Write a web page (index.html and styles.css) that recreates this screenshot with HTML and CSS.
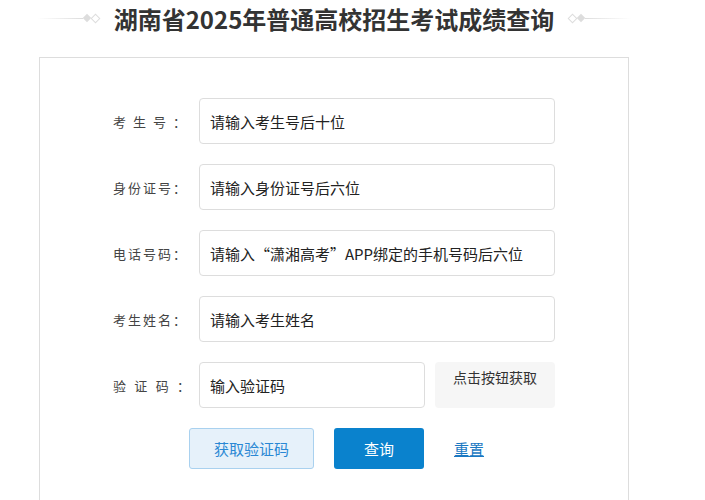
FILE: index.html
```html
<!DOCTYPE html>
<html lang="zh-CN">
<head>
    <meta charset="UTF-8">
    <meta name="viewport" content="width=device-width, initial-scale=1.0">
    <title>湖南省2025年普通高校招生考试成绩查询</title>
    <link rel="stylesheet" href="styles.css">
</head>
<body>
    <div class="wrap">
        <div class="title">
            <span class="deco deco-left"><i class="line"></i><i class="dia"></i><i class="dia dia-o"></i></span>
            <h1>湖南省2025年普通高校招生考试成绩查询</h1>
            <span class="deco deco-right"><i class="dia dia-o"></i><i class="dia"></i><i class="line"></i></span>
        </div>

        <div class="card">
            <div class="row">
                <label class="lbl">考生号：</label>
                <input class="ipt" type="text" placeholder="请输入考生号后十位">
            </div>
            <div class="row">
                <label class="lbl">身份证号：</label>
                <input class="ipt" type="text" placeholder="请输入身份证号后六位">
            </div>
            <div class="row">
                <label class="lbl">电话号码：</label>
                <input class="ipt" type="text" placeholder="请输入“潇湘高考”APP绑定的手机号码后六位">
            </div>
            <div class="row">
                <label class="lbl">考生姓名：</label>
                <input class="ipt" type="text" placeholder="请输入考生姓名">
            </div>
            <div class="row">
                <label class="lbl lbl-wide">验证码：</label>
                <input class="ipt ipt-code" type="text" placeholder="输入验证码">
                <div class="code-box">点击按钮获取</div>
            </div>
            <div class="btns">
                <button class="btn btn-light">获取验证码</button>
                <button class="btn btn-blue">查询</button>
                <a class="reset" href="#">重置</a>
            </div>
        </div>
    </div>
</body>
</html>
```

FILE: styles.css
```css
body {
    margin: 0;
    background: #fff;
    font-family: "Noto Sans CJK SC", "Liberation Sans", sans-serif;
    color: #333;
}
.wrap {
    width: 590px;
    margin-left: 39px;
}
.title {
    display: flex;
    align-items: center;
    justify-content: center;
    height: 36px;
    margin-bottom: 21px;
}
.title h1 {
    margin: 0 14px;
    font-size: 24px;
    font-weight: bold;
    color: #333;
    white-space: nowrap;
}
.deco {
    display: flex;
    align-items: center;
}
.deco .line {
    display: block;
    width: 46px;
    height: 1px;
    background: linear-gradient(to right, #fff, #ddd);
}
.deco-right .line {
    background: linear-gradient(to left, #fff, #ddd);
}
.deco .dia {
    display: block;
    width: 6px;
    height: 6px;
    background: #ddd;
    transform: rotate(45deg);
    margin: 0 1px;
}
.deco .dia-o {
    background: #fff;
    border: 1px solid #ddd;
    width: 5px;
    height: 5px;
}
.card {
    box-sizing: border-box;
    height: 443px;
    border: 1px solid #ddd;
    border-bottom: none;
    padding-top: 40px;
}
.row {
    display: flex;
    align-items: center;
    margin-bottom: 20px;
}
.lbl {
    width: 73px;
    margin-left: 73px;
    margin-right: 13px;
    font-size: 13px;
    color: #444;
    text-align: justify;
    text-align-last: justify;
}
.lbl-wide {
    width: 77px;
    margin-right: 9px;
}
.ipt {
    box-sizing: border-box;
    width: 356px;
    height: 46px;
    border: 1px solid #ddd;
    border-radius: 4px;
    padding: 0 10px;
    font-family: inherit;
    font-size: 15px;
    color: #333;
    outline: none;
}
.ipt::placeholder {
    color: #222;
}
.ipt-code {
    width: 226px;
}
.code-box {
    box-sizing: border-box;
    width: 120px;
    height: 46px;
    margin-left: 10px;
    padding-top: 5px;
    background: #f6f6f6;
    border-radius: 4px;
    text-align: center;
    font-size: 14px;
    color: #333;
}
.btns {
    display: flex;
    align-items: center;
    margin-left: 149px;
}
.btn {
    box-sizing: border-box;
    height: 41px;
    border-radius: 3px;
    font-family: inherit;
    font-size: 15px;
    cursor: pointer;
}
.btn-light {
    width: 125px;
    background: #e6f1fa;
    border: 1px solid #a9d1ef;
    color: #2a88d4;
}
.btn-blue {
    width: 90px;
    margin-left: 20px;
    background: #0a82cd;
    border: none;
    color: #fff;
}
.reset {
    margin-left: 30px;
    font-size: 15px;
    color: #1a78c2;
}
```
